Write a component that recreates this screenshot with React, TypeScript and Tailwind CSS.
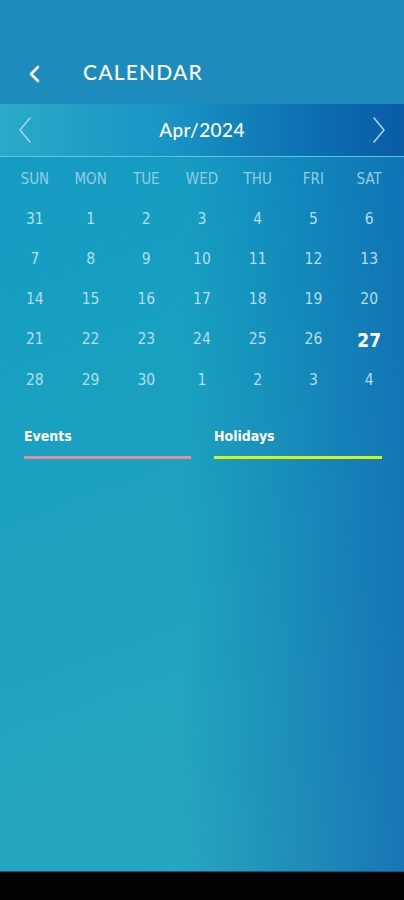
import React from "react";

const weekdays = ["SUN", "MON", "TUE", "WED", "THU", "FRI", "SAT"];
const days = [
  31, 1, 2, 3, 4, 5, 6,
  7, 8, 9, 10, 11, 12, 13,
  14, 15, 16, 17, 18, 19, 20,
  21, 22, 23, 24, 25, 26, 27,
  28, 29, 30, 1, 2, 3, 4,
];

export default function App() {
  return (
    <div className="w-[404px] h-[900px] flex flex-col bg-black overflow-hidden">
      <div className="relative flex-1 flex flex-col bg-[linear-gradient(160deg,#1596c4_0%,#17a0c2_35%,#1fa3c0_60%,#2aa6bf_100%)]">
        <div className="pointer-events-none absolute inset-0 bg-[linear-gradient(90deg,rgba(0,0,0,0)_0%,rgba(0,0,0,0)_45%,rgba(8,80,170,0.55)_100%)]" />
        <div className="relative flex flex-col flex-1">
          {/* header */}
          <div className="h-[104px] bg-[#1e8bbd] flex items-end pb-[19px]">
            <svg width="40" height="22" viewBox="0 0 40 22" className="ml-[22px]">
              <path d="M16 4 L9 11 L16 18" fill="none" stroke="white" strokeWidth="2.6" strokeLinecap="round" strokeLinejoin="round" />
            </svg>
            <span className="ml-[21px] text-white text-[21px] leading-[26px] tracking-[1.2px] font-[Lato,'Open_Sans',sans-serif] font-medium">
              CALENDAR
            </span>
          </div>
          {/* month bar */}
          <div className="h-[53px] flex items-center justify-between bg-[linear-gradient(90deg,#2ba9c9_0%,#1996c4_40%,#0c6cb0_80%,#0a5ca6_100%)] border-b-[1.5px] border-[#5cc3e3]">
            <svg width="24" height="28" viewBox="0 0 24 28" className="ml-[14px]">
              <path d="M16 2 L6 14 L16 26" fill="none" stroke="#9fd6ec" strokeWidth="1.6" strokeLinecap="round" strokeLinejoin="round" />
            </svg>
            <span className="text-white text-[19px] font-[Lato,'Open_Sans',sans-serif] font-medium tracking-[0.4px]">
              Apr/2024
            </span>
            <svg width="24" height="28" viewBox="0 0 24 28" className="mr-[14px]">
              <path d="M8 2 L18 14 L8 26" fill="none" stroke="#9fd6ec" strokeWidth="1.6" strokeLinecap="round" strokeLinejoin="round" />
            </svg>
          </div>
          {/* calendar grid */}
          <div className="px-[7px] pt-[7px] font-['DejaVu_Sans_Condensed','DejaVu_Sans',sans-serif]">
            <div className="grid grid-cols-7 h-[30px] items-center">
              {weekdays.map((w) => (
                <div key={w} className="text-center text-[15px] text-[#8fcfe2]">
                  {w}
                </div>
              ))}
            </div>
            <div className="grid grid-cols-7 mt-[5px]">
              {days.map((d, i) => (
                <div
                  key={i}
                  className={
                    i === 27
                      ? "h-[40.3px] flex items-center justify-center text-[19px] font-bold text-white"
                      : "h-[40.3px] flex items-center justify-center text-[15.5px] text-[#b5dfea]"
                  }
                >
                  {d}
                </div>
              ))}
            </div>
          </div>
          {/* legend */}
          <div className="mt-[27px] pl-[24px] pr-[22px] flex gap-[23px] font-['DejaVu_Sans_Condensed','DejaVu_Sans',sans-serif]">
            <div className="w-[167px] flex flex-col">
              <span className="text-white text-[14px] font-bold leading-[18px]">Events</span>
              <div className="mt-[11px] h-[3px] bg-[#e0909c]" />
            </div>
            <div className="flex-1 flex flex-col">
              <span className="text-white text-[14px] font-bold leading-[18px]">Holidays</span>
              <div className="mt-[11px] h-[3px] bg-[#d6f21c]" />
            </div>
          </div>
          <div className="flex-1" />
        </div>
        <div className="relative h-[1px] bg-[#0e5a7a]" />
      </div>
      <div className="h-[28px] bg-[#030306]" />
    </div>
  );
}
